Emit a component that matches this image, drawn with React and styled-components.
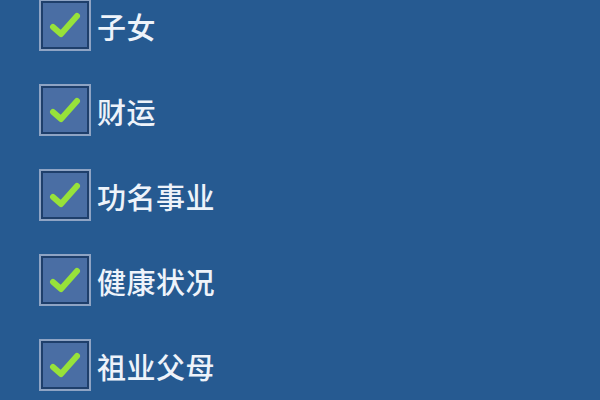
import React from 'react'
import styled, { createGlobalStyle } from 'styled-components'

const items = ['子女', '财运', '功名事业', '健康状况', '祖业父母']

const GlobalStyle = createGlobalStyle`
html, body {
  margin: 0;
  padding: 0;
  background: #265a91;
}
body {
  font-family: "Noto Sans CJK SC", "Noto Sans", sans-serif;
}
`

function App() {
  return (
    <>
      <GlobalStyle />
      <Page>
        <List>
          {items.map(text => (
            <Row key={text}>
              <Box>
                <svg width="32" height="28" viewBox="0 0 32 28">
                  <path
                    d="M4 16 L12 23 L28 5"
                    fill="none"
                    stroke="#97e23a"
                    strokeWidth="6"
                    strokeLinecap="round"
                    strokeLinejoin="round"
                  />
                </svg>
              </Box>
              <Label>{text}</Label>
            </Row>
          ))}
        </List>
      </Page>
    </>
  )
}

export default App

const Page = styled.div`
width: 600px;
height: 400px;
overflow: hidden;
background: #265a91;
`

const List = styled.div`
display: flex;
flex-direction: column;
gap: 34px;
padding-left: 39px;
margin-top: -1px;
`

const Row = styled.div`
display: flex;
align-items: center;
height: 51px;
`

const Box = styled.div`
box-sizing: border-box;
width: 52px;
height: 52px;
border: 2px solid #8fa4c4;
box-shadow: inset 0 0 0 2px #1f3f6b;
background: #4a6ea4;
display: flex;
align-items: center;
justify-content: center;
`

const Label = styled.div`
margin-left: 6px;
color: #eef3fa;
font-size: 29px;
font-weight: 500;
line-height: 1;
letter-spacing: 0.5px;
margin-top: 4px;
`
